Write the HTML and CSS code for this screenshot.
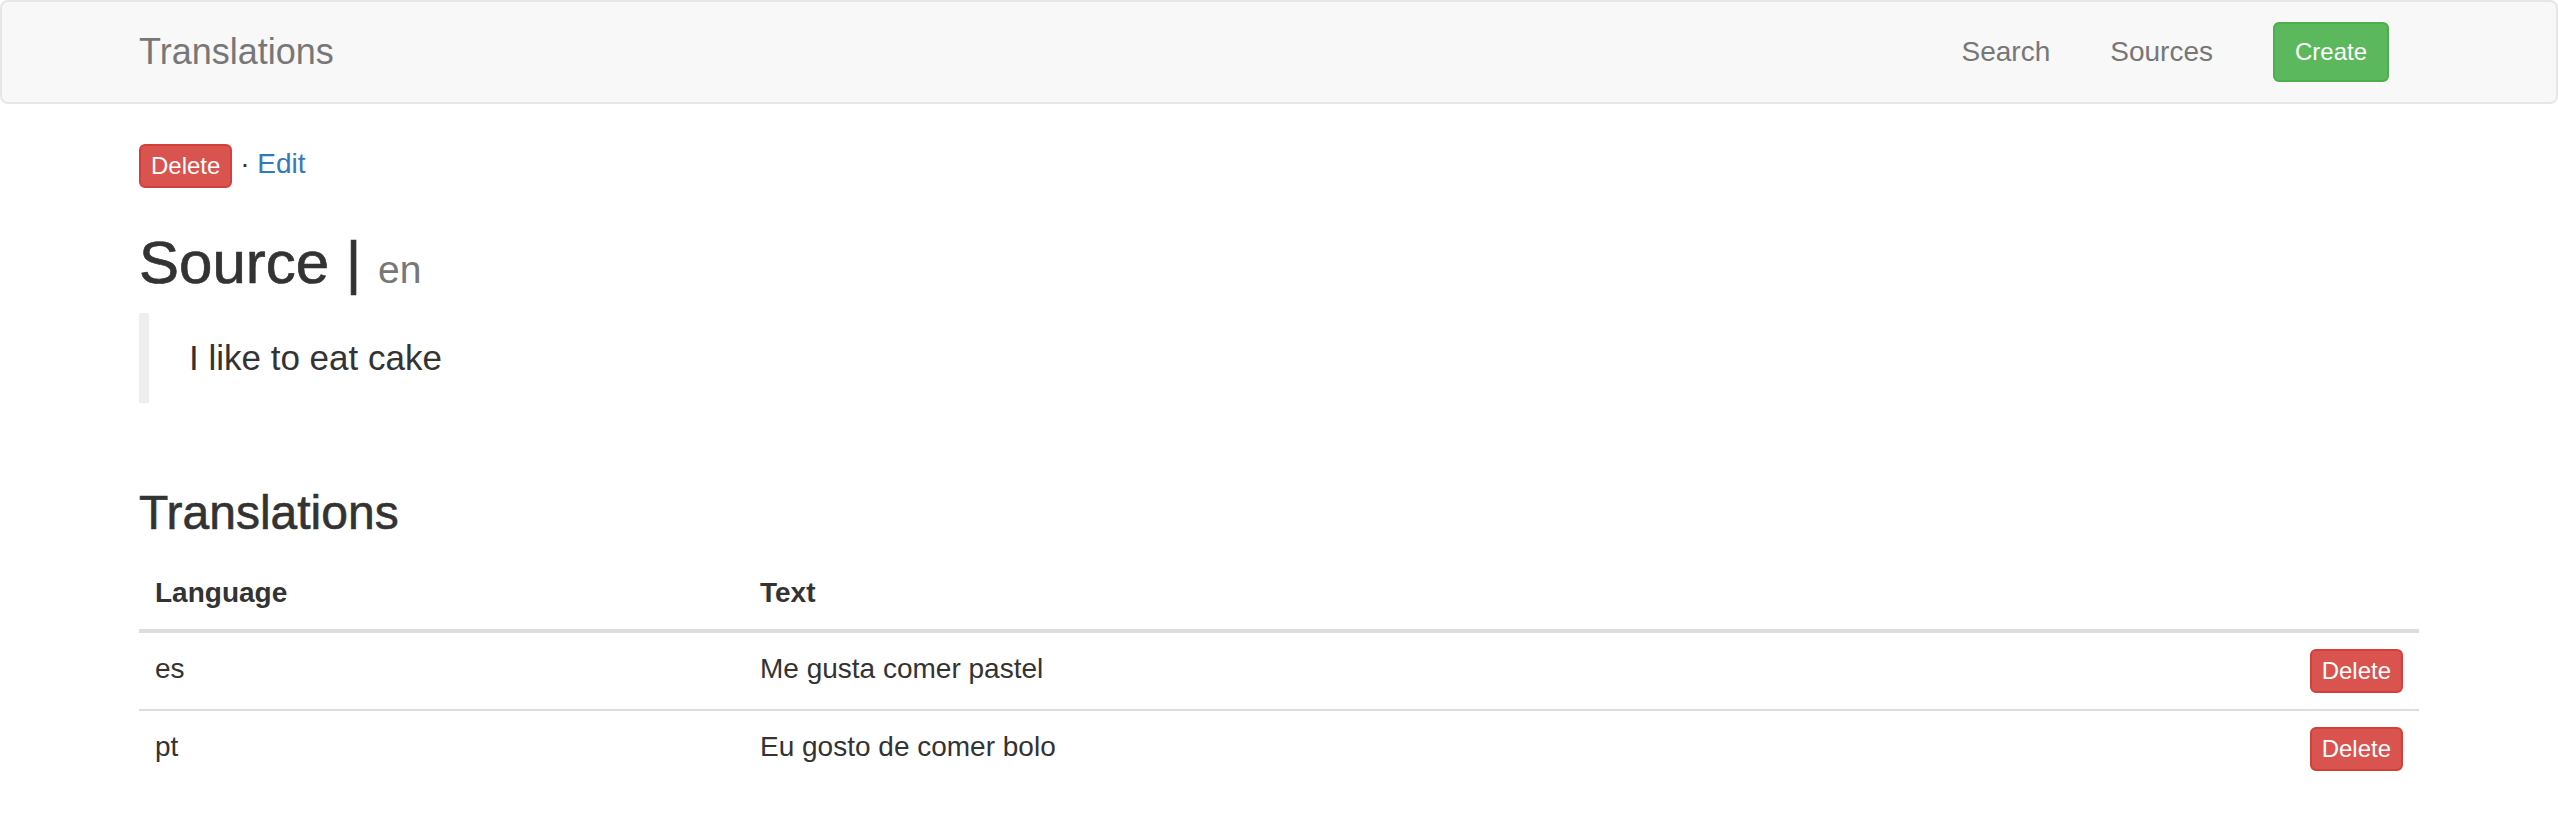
FILE: index.html
```html
<!DOCTYPE html>
<html lang="en">
<head>
<meta charset="utf-8">
<title>Translations</title>
<link rel="stylesheet" href="styles.css">
</head>
<body>
<nav class="navbar">
  <div class="navbar-inner">
    <a class="brand" href="#">Translations</a>
    <ul class="nav">
      <li><a class="nav-link" href="#">Search</a></li>
      <li><a class="nav-link" href="#">Sources</a></li>
      <li class="nav-create"><button class="btn btn-success btn-sm">Create</button></li>
    </ul>
  </div>
</nav>
<main class="container">
  <div class="actions"><button class="btn btn-danger btn-xs">Delete</button> · <a class="link" href="#">Edit</a></div>
  <h2 class="title">Source | <small class="title-lang">en</small></h2>
  <blockquote class="quote">I like to eat cake</blockquote>
  <h3 class="section-title">Translations</h3>
  <table class="table">
    <colgroup>
      <col class="col-lang">
      <col class="col-text">
      <col class="col-action">
    </colgroup>
    <thead>
      <tr><th>Language</th><th>Text</th><th></th></tr>
    </thead>
    <tbody>
      <tr><td>es</td><td>Me gusta comer pastel</td><td class="cell-action"><button class="btn btn-danger btn-xs">Delete</button></td></tr>
      <tr><td>pt</td><td>Eu gosto de comer bolo</td><td class="cell-action"><button class="btn btn-danger btn-xs">Delete</button></td></tr>
    </tbody>
  </table>
</main>
</body>
</html>
```
FILE: styles.css
```css
* { box-sizing: border-box; }
html, body { margin: 0; padding: 0; }
body {
  font-family: "Liberation Sans", Arial, sans-serif;
  font-size: 28px;
  line-height: 40px;
  color: #333;
  background: #fff;
}
a { text-decoration: none; }

.navbar {
  background: #f8f8f8;
  border: 2px solid #e7e7e7;
  border-radius: 8px;
  min-height: 104px;
  margin-bottom: 40px;
}
.navbar-inner {
  width: 2340px;
  margin: 0 auto;
  padding: 0 30px;
  display: flex;
  align-items: flex-start;
  justify-content: space-between;
}
.brand {
  font-size: 36px;
  line-height: 40px;
  padding: 30px 0;
  color: #777;
}
.nav {
  list-style: none;
  margin: 0;
  padding: 0;
  display: flex;
  align-items: flex-start;
}
.nav-link {
  display: block;
  padding: 30px;
  line-height: 40px;
  color: #777;
}
.nav-create {
  margin: 20px 30px 0 30px;
}

.btn {
  display: inline-block;
  font-family: inherit;
  color: #fff;
  border: 2px solid transparent;
  cursor: pointer;
  vertical-align: middle;
  margin: 0;
}
.btn-sm {
  font-size: 24px;
  line-height: 36px;
  padding: 10px 20px;
  border-radius: 6px;
}
.btn-xs {
  font-size: 24px;
  line-height: 36px;
  padding: 2px 10px;
  border-radius: 6px;
}
.btn-success { background: #5cb85c; border-color: #4cae4c; }
.btn-danger { background: #d9534f; border-color: #d43f3a; }

.container {
  width: 2340px;
  margin: 0 auto;
  padding: 0 30px;
}
.actions { line-height: 40px; }
.link { color: #337ab7; }

.title {
  font-size: 60px;
  font-weight: 500;
  line-height: 66px;
  margin: 42px 0 10px;
  -webkit-text-stroke: 0.7px #333;
}
.title-lang {
  font-size: 39px;
  color: #777;
  font-weight: 400;
  -webkit-text-stroke: 0;
}
.quote {
  margin: 0 0 40px;
  padding: 20px 40px;
  border-left: 10px solid #eee;
  font-size: 35px;
  line-height: 50px;
}
.section-title {
  font-size: 48px;
  font-weight: 500;
  line-height: 53px;
  margin: 83px 0 18px;
  -webkit-text-stroke: 0.6px #333;
}

.table {
  width: 100%;
  table-layout: fixed;
  border-collapse: collapse;
  border-spacing: 0;
  margin-bottom: 40px;
}
.col-lang { width: 605px; }
.col-action { width: 126px; }
.table th {
  text-align: left;
  font-weight: bold;
  padding: 16px;
  line-height: 40px;
  vertical-align: bottom;
  border-bottom: 4px solid #ddd;
}
.table td {
  padding: 16px;
  line-height: 40px;
  vertical-align: top;
  border-top: 2px solid #ddd;
}
.cell-action { text-align: right; }
```
